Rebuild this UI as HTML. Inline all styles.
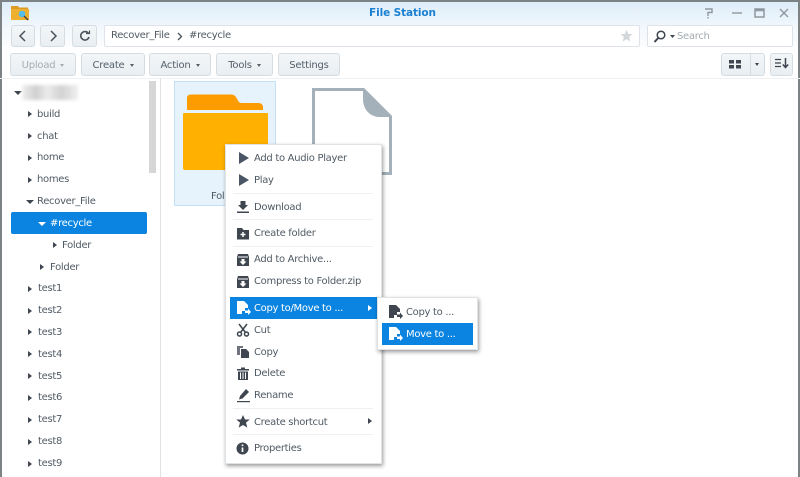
<!DOCTYPE html>
<html><head><meta charset="utf-8"><style>
html,body{margin:0;padding:0}
body{width:800px;height:477px;position:relative;overflow:hidden;background:#fff;font-family:"DejaVu Sans","Liberation Sans",sans-serif;font-size:10px;color:#505a64;filter:blur(.3px)}
.a{position:absolute}
.t{position:absolute;white-space:nowrap;line-height:14px;letter-spacing:-.3px;margin-top:1px}
.b{position:absolute;box-sizing:border-box;border:1px solid #d5dde3;border-radius:3px;background:linear-gradient(#f3f6f8,#e9eef2);height:23px;text-align:center;line-height:23px;color:#55606a;white-space:nowrap;letter-spacing:-.2px}
.c{display:inline-block;width:0;height:0;border-left:2.5px solid transparent;border-right:2.5px solid transparent;border-top:3px solid currentColor;vertical-align:middle;margin-left:2px}
.r{position:absolute;width:0;height:0;border-top:3.5px solid transparent;border-bottom:3.5px solid transparent;border-left:4px solid #3f4650;margin-top:1px}
.d{position:absolute;width:0;height:0;border-left:4px solid transparent;border-right:4px solid transparent;border-top:4px solid #3f4650;margin-top:1px}
svg{position:absolute}
</style></head><body>

<div class="a" style="left:0;top:0;width:800px;height:46px;background:linear-gradient(#dcecf9,#f6fafd 70%,#fbfcfd)"></div>
<div class="a" style="left:0;top:0;width:800px;height:2px;background:#7d8285"></div>
<div class="a" style="left:0;top:0;width:2px;height:477px;background:#7d8285"></div>
<div class="a" style="left:798px;top:0;width:2px;height:477px;background:#7d8285"></div>

<svg style="left:10px;top:4px" width="20" height="17" viewBox="0 0 20 17"><path d="M1 2h7l1 1.500h9v12.500H1z" fill="#dd9a22"/><path d="M1 5h18v11H1z" fill="#eeb030"/><circle cx="12" cy="10" r="3.300" fill="#55bde8"/><path d="M14 12l4 4" stroke="#444" stroke-width="1.500"/></svg>
<div class="t" style="left:369px;top:5px;font-weight:bold;font-size:10.500px;color:#1a80d2;letter-spacing:-.1px">File Station</div>

<svg style="left:703px;top:6px" width="90" height="14" viewBox="0 0 90 14" fill="none" stroke="#8f989f" stroke-width="1.400"><path d="M2 3h7v3.500H5V10M5 11v1.500"/><path d="M29 7h10"/><path d="M52 3h9v8h-9zM52 4.500h9" stroke-width="1.500"/><path d="M77 3l8 8M85 3l-8 8"/></svg>

<div class="b" style="left:11px;top:25px;width:24px;height:22px"></div>
<svg style="left:18px;top:30px" width="10" height="12" fill="none" stroke="#4b545c" stroke-width="1.500"><path d="M7 1L2 6l5 5"/></svg>
<div class="b" style="left:40px;top:25px;width:25px;height:22px"></div>
<svg style="left:48px;top:30px" width="10" height="12" fill="none" stroke="#4b545c" stroke-width="1.500"><path d="M3 1l5 5-5 5"/></svg>
<div class="b" style="left:72px;top:25px;width:25px;height:22px"></div>
<svg style="left:79px;top:30px" width="12" height="12" fill="none" stroke="#4b545c" stroke-width="1.600"><path d="M9.500 3.500A4.200 4.200 0 1 0 10 7"/><path d="M7 3.500h3.500V.5" stroke-width="1.200"/></svg>

<div class="a" style="left:104px;top:25px;width:536px;height:22px;box-sizing:border-box;border:1px solid #dde3e8;background:#fff;border-radius:2px"></div>
<div class="t" style="left:111px;top:28px">Recover_File</div>
<svg style="left:176px;top:32px" width="8" height="9" fill="none" stroke="#4b545c" stroke-width="1.300"><path d="M2 1l3.500 3.500L2 8"/></svg>
<div class="t" style="left:189px;top:28px">#recycle</div>
<svg style="left:620px;top:30px" width="13" height="12"><path d="M6.500 0l1.800 4h4.200l-3.300 2.900 1 4.600-3.700-2.400-3.700 2.400 1-4.600L.5 4h4.200z" fill="#d2d7dc"/></svg>

<div class="a" style="left:647px;top:25px;width:146px;height:22px;box-sizing:border-box;border:1px solid #dde3e8;background:#fff;border-radius:2px"></div>
<svg style="left:653px;top:30px" width="24" height="13" fill="none" stroke="#3f4650" stroke-width="1.500"><circle cx="8" cy="5" r="3.800"/><path d="M5.200 8L1.500 12" stroke-width="2"/><path d="M17 5h5l-2.500 3z" fill="#3f4650" stroke="none"/></svg>
<div class="t" style="left:677px;top:29px;color:#a3abb2">Search</div>

<div class="b" style="left:10px;top:53px;width:66px;color:#a5adb4">Upload <i class="c"></i></div>
<div class="b" style="left:81px;top:53px;width:64px">Create <i class="c"></i></div>
<div class="b" style="left:149px;top:53px;width:62px">Action <i class="c"></i></div>
<div class="b" style="left:216px;top:53px;width:57px">Tools <i class="c"></i></div>
<div class="b" style="left:278px;top:53px;width:62px">Settings</div>

<div class="b" style="left:721px;top:53px;width:44px"></div>
<div class="a" style="left:750px;top:54px;width:1px;height:21px;background:#d5dde3"></div>
<svg style="left:729px;top:60px" width="12" height="9" fill="#3f4650"><rect width="5" height="3.500"/><rect x="7" width="5" height="3.500"/><rect y="5" width="5" height="3.500"/><rect x="7" y="5" width="5" height="3.500"/></svg>
<div class="a" style="left:755px;top:63px;width:0;height:0;border-left:2.500px solid transparent;border-right:2.500px solid transparent;border-top:3px solid #3f4650"></div>
<div class="b" style="left:770px;top:53px;width:23px"></div>
<svg style="left:775px;top:58px" width="14" height="11" fill="none" stroke="#3f4650" stroke-width="1.300"><path d="M0 1.500h6M0 5h6M0 8.500h6"/><path d="M10.500 0v9M7.800 6.500l2.700 3 2.700-3" stroke-width="1.500"/></svg>

<div class="a" style="left:0;top:78px;width:800px;height:1px;background:#eef1f3"></div>
<div class="a" style="left:160px;top:78px;width:1px;height:399px;background:#dfe3e6"></div>
<div class="a" style="left:149px;top:81px;width:7px;height:92px;background:#d6d6d6"></div>

<div class="d" style="left:14px;top:90px"></div>
<div class="a" style="left:22px;top:85px;width:56px;height:15px;filter:blur(1.500px);background:linear-gradient(90deg,#efefef,#cfcfcf 25%,#ececec 45%,#d2d2d2 70%,#efefef)"></div>

<div class="r" style="left:28px;top:110px"></div><div class="t" style="left:37px;top:107px">build</div>
<div class="r" style="left:28px;top:132px"></div><div class="t" style="left:37px;top:129px">chat</div>
<div class="r" style="left:28px;top:154px"></div><div class="t" style="left:37px;top:150px">home</div>
<div class="r" style="left:28px;top:176px"></div><div class="t" style="left:37px;top:172px">homes</div>
<div class="d" style="left:26px;top:199px"></div><div class="t" style="left:37px;top:194px">Recover_File</div>
<div class="a" style="left:11px;top:212px;width:136px;height:22px;background:#0a84e0;border-radius:2px"></div>
<div class="d" style="left:38px;top:221px;border-top-color:#fff"></div><div class="t" style="left:50px;top:216px;color:#fff">#recycle</div>
<div class="r" style="left:53px;top:241px"></div><div class="t" style="left:62px;top:238px">Folder</div>
<div class="r" style="left:40px;top:263px"></div><div class="t" style="left:50px;top:260px">Folder</div>
<div class="r" style="left:28px;top:285px"></div><div class="t" style="left:38px;top:281px">test1</div>
<div class="r" style="left:28px;top:307px"></div><div class="t" style="left:38px;top:303px">test2</div>
<div class="r" style="left:28px;top:328px"></div><div class="t" style="left:38px;top:325px">test3</div>
<div class="r" style="left:28px;top:350px"></div><div class="t" style="left:38px;top:347px">test4</div>
<div class="r" style="left:28px;top:372px"></div><div class="t" style="left:38px;top:369px">test5</div>
<div class="r" style="left:28px;top:394px"></div><div class="t" style="left:38px;top:390px">test6</div>
<div class="r" style="left:28px;top:416px"></div><div class="t" style="left:38px;top:412px">test7</div>
<div class="r" style="left:28px;top:438px"></div><div class="t" style="left:38px;top:434px">test8</div>
<div class="r" style="left:28px;top:460px"></div><div class="t" style="left:38px;top:456px">test9</div>

<div class="a" style="left:174px;top:81px;width:102px;height:125px;box-sizing:border-box;border:1px solid #c4e0f5;background:#e6f3fc"></div>
<svg style="left:182px;top:93px" width="88" height="80" viewBox="0 0 88 80"><path d="M5 17V5q0-3.500 4-3.500h40q4 0 5.500 3.500l2 3.500q1 1.500 3 1.500h17q4 0 4.500 4v3z" fill="#fd9c00"/><path d="M2 20h83q1 0 1 1v56H3q-2 0-2-2V21q0-1 1-1z" fill="#ffb000"/></svg>
<div class="t" style="left:211px;top:189px">Fol</div>

<svg style="left:310px;top:87px" width="84" height="90" viewBox="0 0 84 90"><path d="M3.500 2.500h50l27 27v57h-77z" fill="#fff" stroke="#a4b1ba" stroke-width="3"/><path d="M53 3l28 27H68Q55 28 53 14z" fill="#a4b1ba"/></svg>

<div class="a" style="left:225px;top:144px;width:157px;height:320px;background:#fff;border:1px solid #dfe3e6;box-sizing:border-box;box-shadow:1px 2px 4px rgba(0,0,0,.4)"></div>
<div class="a" style="left:230px;top:297px;width:147px;height:22px;background:#0a84e0"></div>

<svg style="left:238px;top:151px" width="12" height="14"><path d="M1 1l10 6-10 6z" fill="#4a5565"/></svg>
<div class="t" style="left:254px;top:151px">Add to Audio Player</div>
<svg style="left:238px;top:173px" width="12" height="14"><path d="M1 1l10 6-10 6z" fill="#4a5565"/></svg>
<div class="t" style="left:254px;top:173px">Play</div>
<div class="a" style="left:233px;top:193px;width:140px;height:1px;background:#eef0f2"></div>
<svg style="left:236px;top:200px" width="14" height="14" fill="#3f4650"><path d="M4.500 1h5v4H12L7 10 2 5h2.500zM1 11.500h12V13H1z"/></svg>
<div class="t" style="left:254px;top:200px">Download</div>
<div class="a" style="left:233px;top:219px;width:140px;height:1px;background:#eef0f2"></div>
<svg style="left:236px;top:227px" width="14" height="13"><path d="M1 1h5l1.500 2H13v9.500H1z" fill="#3f4650"/><path d="M7 5v5M4.500 7.500h5" stroke="#fff" stroke-width="1.500"/></svg>
<div class="t" style="left:254px;top:226px">Create folder</div>
<div class="a" style="left:233px;top:246px;width:140px;height:1px;background:#eef0f2"></div>
<svg style="left:236px;top:253px" width="14" height="14"><path d="M2 1h10l1 3v9H1V4z" fill="#3f4650"/><path d="M2 4h10" stroke="#fff"/><path d="M5.500 6h3v2.500h2L7 12 3.500 8.500h2z" fill="#fff"/></svg>
<div class="t" style="left:254px;top:252px">Add to Archive...</div>
<svg style="left:236px;top:275px" width="14" height="14"><path d="M2 1h10l1 3v9H1V4z" fill="#3f4650"/><path d="M2 4h10" stroke="#fff"/><path d="M5.500 6h3v2.500h2L7 12 3.500 8.500h2z" fill="#fff"/></svg>
<div class="t" style="left:254px;top:274px">Compress to Folder.zip</div>

<svg style="left:236px;top:301px" width="15" height="14" fill="#fff"><path d="M1 0h7l4 4v3H9v3H6v3H1z"/><path d="M9 9.500h3V7.500l3 3.500-3 3v-2H9z"/></svg>
<div class="t" style="left:254px;top:301px;color:#fff">Copy to/Move to ...</div>
<div class="r" style="left:368px;top:304px;border-left-color:#fff"></div>

<svg style="left:236px;top:323px" width="14" height="14" fill="none" stroke="#3f4650" stroke-width="1.500"><circle cx="3.500" cy="11" r="2"/><circle cx="10.500" cy="11" r="2"/><path d="M4.500 9.500L11 1M9.500 9.500L3 1"/></svg>
<div class="t" style="left:254px;top:323px">Cut</div>
<svg style="left:236px;top:345px" width="14" height="14" fill="#3f4650"><path d="M1 1h6v2H4v7H1z" opacity=".75"/><path d="M5 4h5l3 3v6H5z"/></svg>
<div class="t" style="left:254px;top:345px">Copy</div>
<svg style="left:236px;top:367px" width="14" height="14"><path d="M1 2h12v1.500H1zM5 .5h4V2H5z" fill="#3f4650"/><path d="M2 4.500h10V13H2z" fill="#3f4650"/><path d="M4.500 5.500v6.500M7 5.500v6.500M9.500 5.500v6.500" stroke="#fff"/></svg>
<div class="t" style="left:254px;top:366px">Delete</div>
<svg style="left:236px;top:388px" width="15" height="15" fill="#3f4650"><path d="M10 1l3 3-6.500 6.500L3 11.500 4 8z"/><path d="M1 13h13v1.200H1z"/></svg>
<div class="t" style="left:254px;top:388px">Rename</div>
<div class="a" style="left:233px;top:408px;width:140px;height:1px;background:#eef0f2"></div>
<svg style="left:236px;top:415px" width="14" height="13"><path d="M7 0l2 4.500h4.800L10 7.600l1.300 5L7 10l-4.300 2.600 1.300-5L.2 4.500H5z" fill="#3f4650"/></svg>
<div class="t" style="left:254px;top:415px">Create shortcut</div>
<div class="r" style="left:368px;top:417px"></div>
<div class="a" style="left:233px;top:434px;width:140px;height:1px;background:#eef0f2"></div>
<svg style="left:236px;top:442px" width="13" height="13"><circle cx="6.500" cy="6.500" r="6" fill="#3f4650"/><path d="M6.500 5.500v4.500M6.500 2.500v1.600" stroke="#fff" stroke-width="1.700"/></svg>
<div class="t" style="left:254px;top:441px">Properties</div>

<div class="a" style="left:377px;top:297px;width:101px;height:53px;background:#fff;border:1px solid #dfe3e6;box-sizing:border-box;box-shadow:1px 2px 4px rgba(0,0,0,.4)"></div>
<div class="a" style="left:382px;top:323px;width:91px;height:22px;background:#0a84e0"></div>
<svg style="left:388px;top:305px" width="15" height="14" fill="#3f4650"><path d="M1 0h7l4 4v3H9v3H6v3H1z"/><path d="M9 9.500h3V7.500l3 3.500-3 3v-2H9z"/></svg>
<div class="t" style="left:406px;top:305px">Copy to ...</div>
<svg style="left:388px;top:327px" width="15" height="14" fill="#fff"><path d="M1 0h7l4 4v3H9v3H6v3H1z"/><path d="M9 9.500h3V7.500l3 3.500-3 3v-2H9z"/></svg>
<div class="t" style="left:406px;top:327px;color:#fff">Move to ...</div>
</body></html>
